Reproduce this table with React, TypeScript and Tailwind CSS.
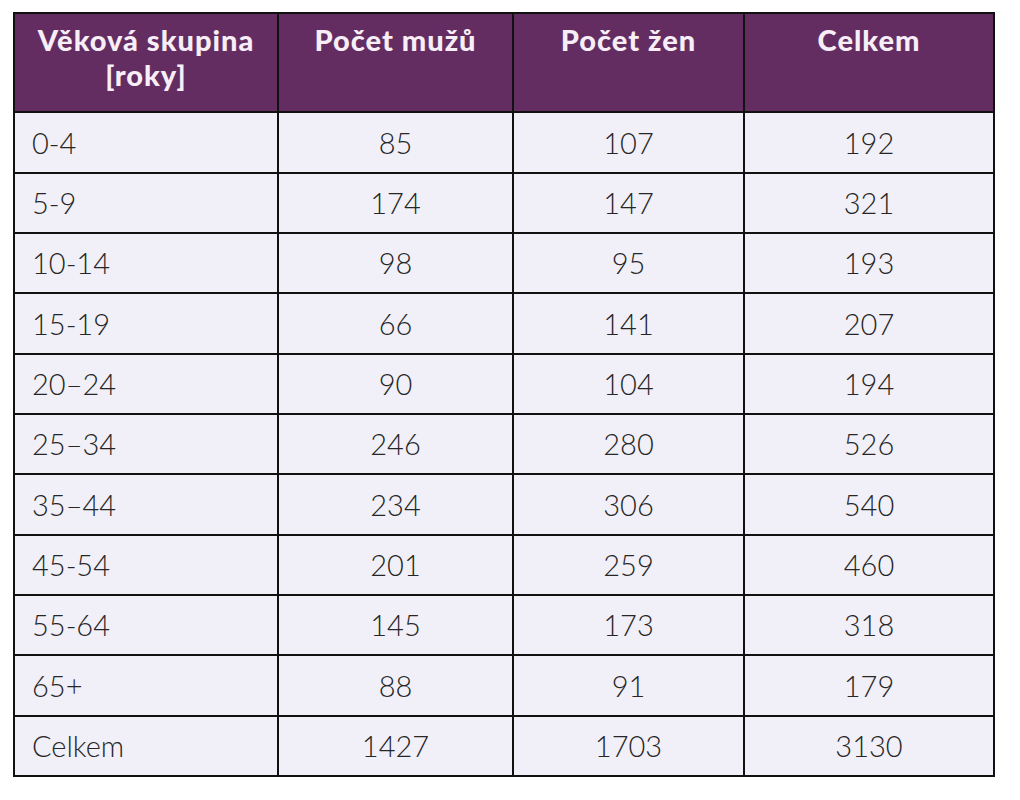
import React from 'react';

const rows: [string, number, number, number][] = [
  ['0-4', 85, 107, 192],
  ['5-9', 174, 147, 321],
  ['10-14', 98, 95, 193],
  ['15-19', 66, 141, 207],
  ['20–24', 90, 104, 194],
  ['25–34', 246, 280, 526],
  ['35–44', 234, 306, 540],
  ['45-54', 201, 259, 460],
  ['55-64', 145, 173, 318],
  ['65+', 88, 91, 179],
  ['Celkem', 1427, 1703, 3130],
];

const th = 'border-2 border-[#111] align-top pt-[8px] text-[29px] font-black tracking-[1px] leading-[35px] text-center';
const td = 'border-2 border-[#111] text-center align-middle';

const App: React.FC = () => (
  <div className="w-[1020px] h-[800px] bg-white pt-[12px] pl-[13px]" style={{ fontFamily: 'Lato, "Noto Sans", sans-serif' }}>
    <table className="border-collapse table-fixed w-[980px] text-[#262626]">
      <colgroup>
        <col className="w-[264px]" />
        <col className="w-[235px]" />
        <col className="w-[231px]" />
        <col className="w-[250px]" />
      </colgroup>
      <thead>
        <tr className="h-[99px] bg-[#632d62] text-[#f7eef7]">
          <th className={th}>
            Věková skupina
            <br />
            [roky]
          </th>
          <th className={th}>Počet mužů</th>
          <th className={th}>Počet žen</th>
          <th className={th}>Celkem</th>
        </tr>
      </thead>
      <tbody className="bg-[#f1f0f8] text-[29px] font-light">
        {rows.map(([age, m, z, c], i) => (
          <tr key={age} className={i % 3 === 0 ? 'h-[61px]' : 'h-[60px]'}>
            <td className="border-2 border-[#111] pl-[17px] align-middle">{age}</td>
            <td className={td}>{m}</td>
            <td className={td}>{z}</td>
            <td className={td}>{c}</td>
          </tr>
        ))}
      </tbody>
    </table>
  </div>
);

export default App;
